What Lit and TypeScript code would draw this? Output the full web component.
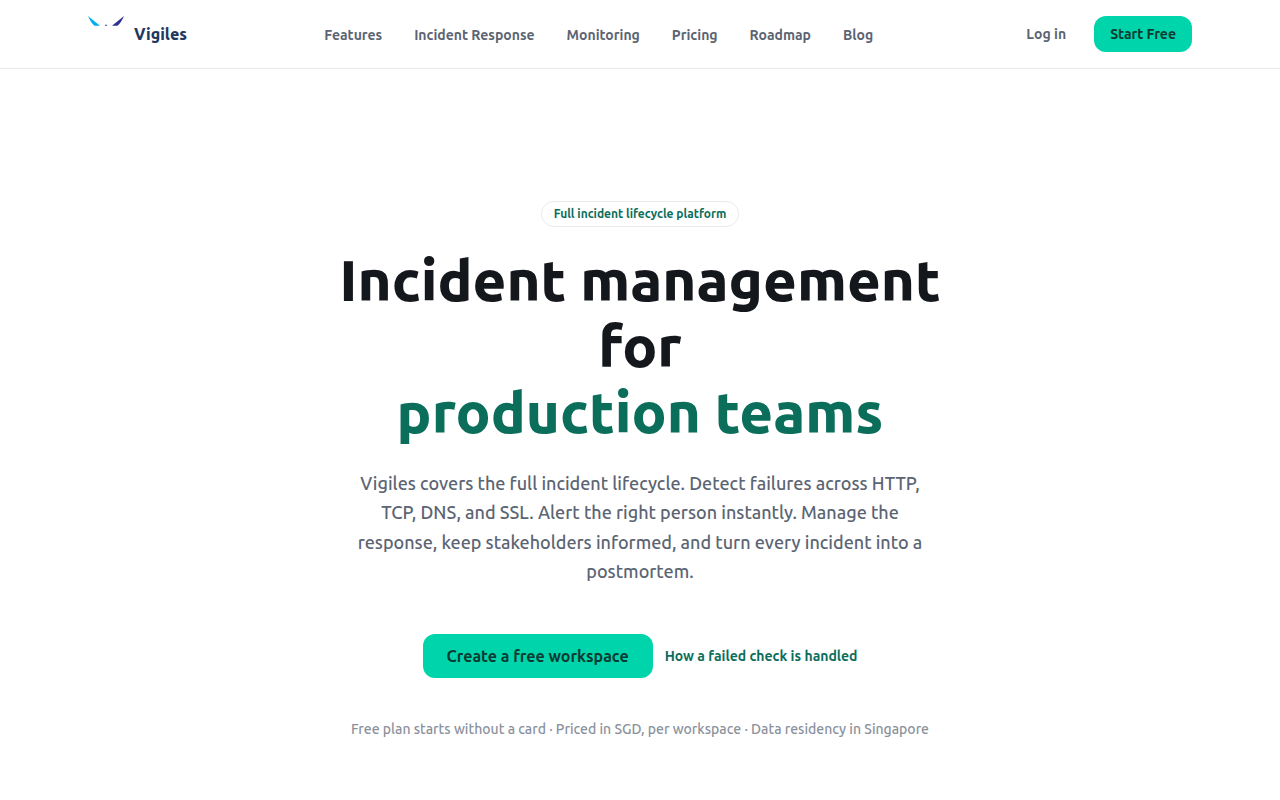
import { LitElement, html, css } from "lit";
import { customElement } from "lit/decorators.js";

const NAV_ITEMS = ["Features", "Incident Response", "Monitoring", "Pricing", "Roadmap", "Blog"];

@customElement("app-root")
export class AppRoot extends LitElement {
  static styles = css`
    :host {
      display: block;
      min-height: 100vh;
      background: #fff;
      color: #14171c;
      font-family: Ubuntu, "Noto Sans", sans-serif;
      font-weight: 500;
    }
    a {
      color: inherit;
      text-decoration: none;
    }
    .header {
      border-bottom: 1px solid #e8eaec;
    }
    .bar {
      display: flex;
      align-items: center;
      justify-content: space-between;
      box-sizing: border-box;
      max-width: 1152px;
      margin: 0 auto;
      padding: 16px 24px;
    }
    .brand {
      display: flex;
      align-items: center;
      gap: 10px;
      color: #1e3a5f;
      font-size: 16px;
      font-weight: 800;
    }
    .logo {
      width: 36px;
      height: 36px;
    }
    .links,
    .actions,
    .badge,
    .primary,
    .secondary {
      font-weight: 600;
    }
    .links {
      display: flex;
      gap: 32px;
      padding-top: 2px;
      color: #5b6472;
      font-size: 14px;
      line-height: 20px;
    }
    .actions {
      display: flex;
      align-items: center;
      gap: 12px;
      font-size: 14px;
      line-height: 20px;
    }
    .login {
      padding: 8px 16px;
      color: #5b6472;
    }
    .start {
      padding: 8px 16px;
      border-radius: 12px;
      background: #00d4aa;
      color: #0b3b32;
    }
    .hero {
      display: flex;
      flex-direction: column;
      align-items: center;
      max-width: 672px;
      margin: 0 auto;
      padding: 132px 24px 60px;
      text-align: center;
    }
    .badge {
      padding: 4px 12px;
      border: 1px solid #e8eaec;
      border-radius: 13px;
      color: #0b6e5b;
      font-size: 12px;
      line-height: 16px;
    }
    .title {
      margin: 20px 0 0;
      font-size: 58px;
      font-weight: 800;
      line-height: 66px;
    }
    .accent {
      display: block;
      color: #0b6e5b;
    }
    .lead {
      max-width: 576px;
      margin: 24px 0 0;
      color: #5b6472;
      font-size: 18px;
      line-height: 1.625;
    }
    .cta {
      display: flex;
      align-items: center;
      gap: 12px;
      margin-top: 48px;
    }
    .primary {
      padding: 10px 24px;
      border-radius: 12px;
      background: #00d4aa;
      color: #0b3b32;
      font-size: 16px;
      line-height: 24px;
    }
    .secondary {
      color: #0b6e5b;
      font-size: 14px;
      line-height: 20px;
    }
    .note {
      margin: 40px 0 0;
      color: #8a919c;
      font-size: 14px;
      line-height: 22px;
    }
  `;

  render() {
    return html`
      <header class="header">
        <div class="bar">
          <a class="brand" href="#">
            <svg class="logo" viewBox="0 0 36 36" aria-hidden="true">
              <path d="M0 0L12 9.7H6.500Q3 7 0 0Z" fill="#00aeef" />
              <path d="M36 0L24 9.700H29.500Q33 7 36 0Z" fill="#2e3192" />
              <path d="M16.700 9.800L18 8.200L19.300 9.800Z" fill="#2e3192" />
            </svg>
            <span>Vigiles</span>
          </a>
          <nav class="links" aria-label="Main">
            ${NAV_ITEMS.map((item) => html`<a href="#">${item}</a>`)}
          </nav>
          <div class="actions">
            <a class="login" href="#">Log in</a>
            <a class="start" href="#">Start Free</a>
          </div>
        </div>
      </header>
      <main class="hero">
        <span class="badge">Full incident lifecycle platform</span>
        <h1 class="title">Incident management for <span class="accent">production teams</span></h1>
        <p class="lead">
          Vigiles covers the full incident lifecycle. Detect failures across HTTP, TCP, DNS, and SSL.
          Alert the right person instantly. Manage the response, keep stakeholders informed, and turn
          every incident into a postmortem.
        </p>
        <div class="cta">
          <a class="primary" href="#">Create a free workspace</a>
          <a class="secondary" href="#">How a failed check is handled</a>
        </div>
        <p class="note">
          Free plan starts without a card · Priced in SGD, per workspace · Data residency in Singapore
        </p>
      </main>
    `;
  }
}
